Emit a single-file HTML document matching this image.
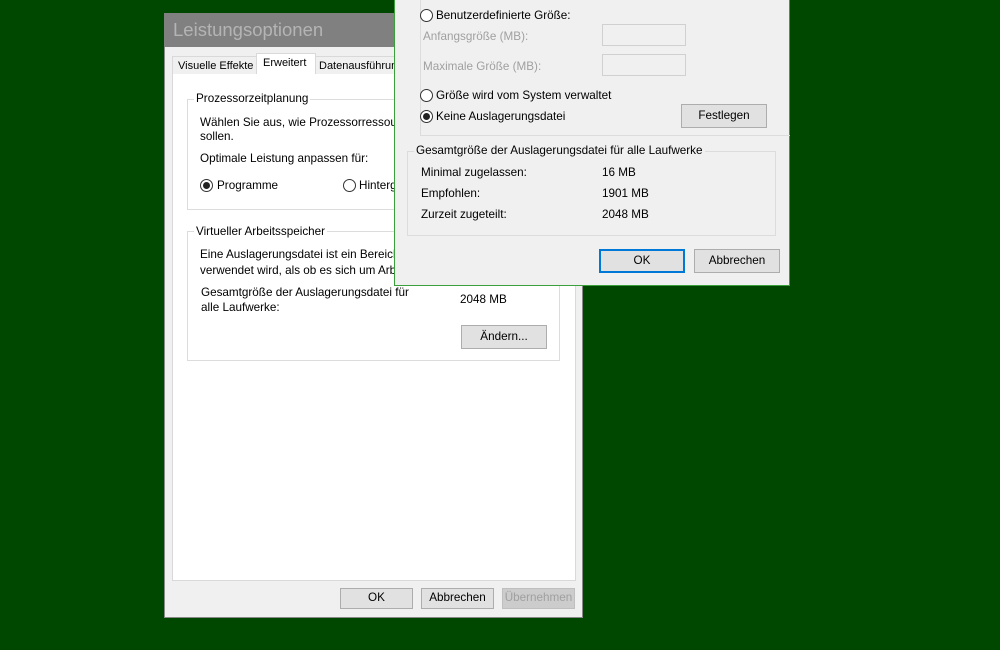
<!DOCTYPE html>
<html><head><meta charset="utf-8"><style>
*{margin:0;padding:0;box-sizing:border-box}
body{width:1000px;height:650px;background:#004800;position:relative;overflow:hidden;font-family:"Liberation Sans",sans-serif;font-size:11.7px;color:#000}
.a{position:absolute;white-space:nowrap}
.btn{position:absolute;background:#e1e1e1;border:1px solid #adadad;text-align:center;line-height:18px;font-size:11.7px}
.grp{position:absolute;border:1px solid #dcdcdc}
.lg{position:absolute;background:inherit;padding:0 2px}
.r{position:absolute;width:13px;height:13px;border:1px solid #333;border-radius:50%;background:#fff}
.r.on::after{content:"";position:absolute;left:2px;top:2px;width:7px;height:7px;border-radius:50%;background:#222}
</style></head><body>
<div class="a" style="left:164px;top:13px;width:419px;height:605px;background:#f0f0f0;border:1px solid #888"></div>
<div class="a" style="left:164px;top:13px;width:419px;height:34px;background:#808080"></div>
<div class="a" style="left:173px;top:19px;font-size:18.5px;color:#b4b4b4">Leistungsoptionen</div>
<div class="a" style="left:172px;top:56px;width:85px;height:19px;border:1px solid #d9d9d9;border-bottom:none;background:#f0f0f0"></div>
<div class="a" style="left:178px;top:60px;font-size:11px">Visuelle Effekte</div>
<div class="a" style="left:256px;top:53px;width:60px;height:22px;border:1px solid #d9d9d9;border-bottom:none;background:#fff"></div>
<div class="a" style="left:263px;top:57px;font-size:11px">Erweitert</div>
<div class="a" style="left:315px;top:56px;width:90px;height:19px;border:1px solid #d9d9d9;border-bottom:none;background:#f0f0f0"></div>
<div class="a" style="left:319px;top:60px;font-size:11px">Datenausführun</div>
<div class="a" style="left:172px;top:74px;width:404px;height:507px;background:#fff;border:1px solid #d9d9d9;border-top:none"></div>
<div class="a" style="left:256px;top:74px;width:60px;height:2px;background:#fff"></div>
<div class="grp" style="left:187px;top:99px;width:373px;height:111px;background:#fff"></div>
<div class="lg a" style="left:194px;top:92px;background:#fff">Prozessorzeitplanung</div>
<div class="a" style="left:200px;top:116px">Wählen Sie aus, wie Prozessorressourcen</div>
<div class="a" style="left:200px;top:130px">sollen.</div>
<div class="a" style="left:200px;top:152px">Optimale Leistung anpassen für:</div>
<div class="r on" style="left:200px;top:179px"></div>
<div class="a" style="left:217px;top:179px">Programme</div>
<div class="r" style="left:343px;top:179px"></div>
<div class="a" style="left:359px;top:179px">Hintergrund</div>
<div class="grp" style="left:187px;top:231px;width:373px;height:130px;background:#fff"></div>
<div class="lg a" style="left:194px;top:225px;background:#fff">Virtueller Arbeitsspeicher</div>
<div class="a" style="left:200px;top:248px">Eine Auslagerungsdatei ist ein Bereich</div>
<div class="a" style="left:200px;top:264px">verwendet wird, als ob es sich um Arbeitsspeicher</div>
<div class="a" style="left:201px;top:286px">Gesamtgröße der Auslagerungsdatei für</div>
<div class="a" style="left:201px;top:301px">alle Laufwerke:</div>
<div class="a" style="left:460px;top:293px">2048 MB</div>
<div class="btn" style="left:461px;top:325px;width:86px;height:24px;line-height:22px">Ändern...</div>
<div class="btn" style="left:340px;top:588px;width:73px;height:21px">OK</div>
<div class="btn" style="left:421px;top:588px;width:73px;height:21px">Abbrechen</div>
<div class="btn" style="left:502px;top:588px;width:73px;height:21px;background:#ccc;border-color:#bfbfbf;color:#a0a0a0">Übernehmen</div>
<div class="a" style="left:394px;top:-2px;width:396px;height:288px;background:#f0f0f0;border:1px solid #3aa03a"></div>
<div class="a" style="left:420px;top:-2px;width:370px;height:138px;border-left:1px solid #dcdcdc;border-bottom:1px solid #dcdcdc"></div>
<div class="r" style="left:420px;top:9px"></div>
<div class="a" style="left:436px;top:9px">Benutzerdefinierte Größe:</div>
<div class="a" style="left:423px;top:30px;color:#a0a0a0">Anfangsgröße (MB):</div>
<div class="a" style="left:602px;top:24px;width:84px;height:22px;border:1px solid #d0d0d0;background:#f0f0f0"></div>
<div class="a" style="left:423px;top:60px;color:#a0a0a0">Maximale Größe (MB):</div>
<div class="a" style="left:602px;top:54px;width:84px;height:22px;border:1px solid #d0d0d0;background:#f0f0f0"></div>
<div class="r" style="left:420px;top:89px"></div>
<div class="a" style="left:436px;top:89px">Größe wird vom System verwaltet</div>
<div class="r on" style="left:420px;top:110px"></div>
<div class="a" style="left:436px;top:110px">Keine Auslagerungsdatei</div>
<div class="btn" style="left:681px;top:104px;width:86px;height:24px;line-height:22px">Festlegen</div>
<div class="grp" style="left:407px;top:151px;width:369px;height:85px"></div>
<div class="lg a" style="left:414px;top:144px;background:#f0f0f0">Gesamtgröße der Auslagerungsdatei für alle Laufwerke</div>
<div class="a" style="left:421px;top:166px">Minimal zugelassen:</div><div class="a" style="left:602px;top:166px">16 MB</div>
<div class="a" style="left:421px;top:187px">Empfohlen:</div><div class="a" style="left:602px;top:187px">1901 MB</div>
<div class="a" style="left:421px;top:208px">Zurzeit zugeteilt:</div><div class="a" style="left:602px;top:208px">2048 MB</div>
<div class="btn" style="left:599px;top:249px;width:86px;height:24px;line-height:20px;border:2px solid #0078d7">OK</div>
<div class="btn" style="left:694px;top:249px;width:86px;height:24px;line-height:22px">Abbrechen</div>
</body></html>
